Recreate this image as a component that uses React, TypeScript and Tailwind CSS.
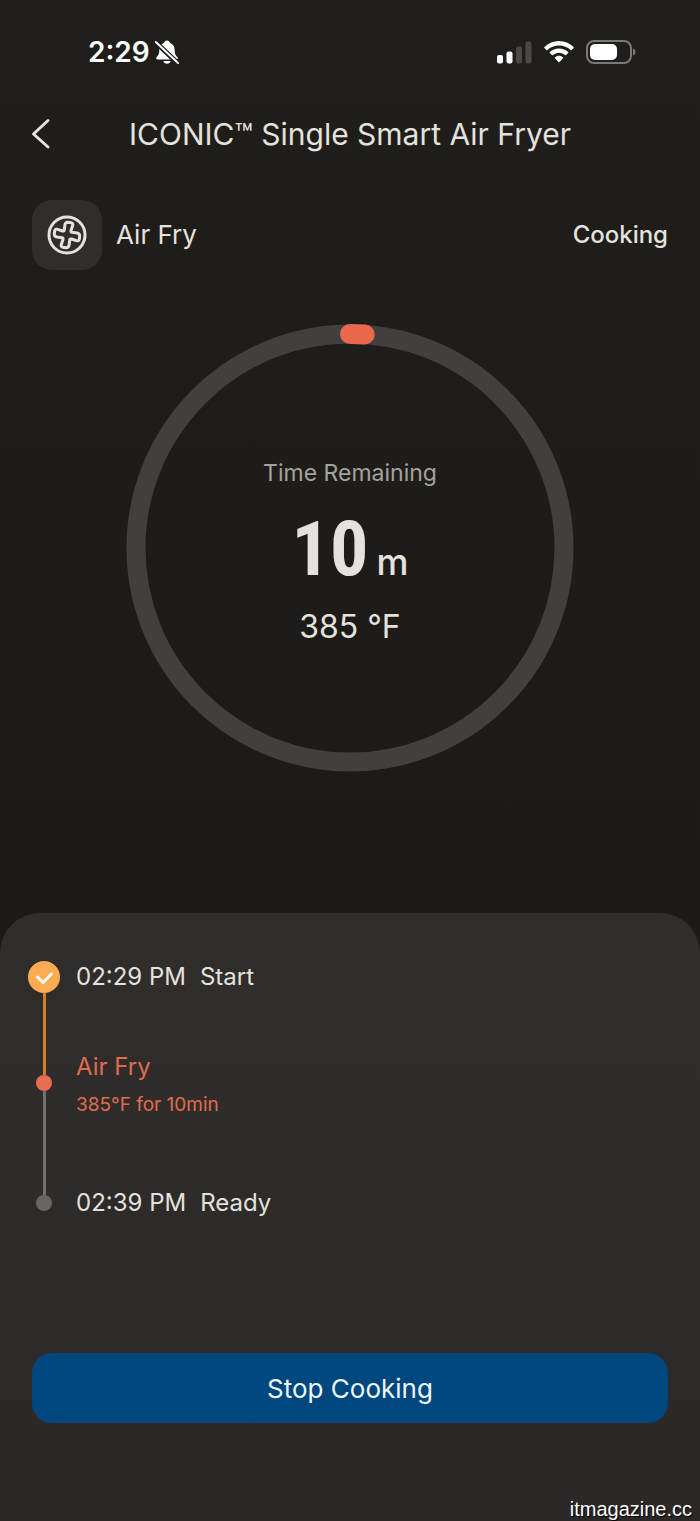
import type { ReactNode } from "react";

const RING_RADIUS = 214;
const RING_LENGTH = 2 * Math.PI * RING_RADIUS;

function StatusBar() {
  return (
    <div className="flex h-[104px] items-center justify-between pr-16 pl-[88px] text-white">
      <div className="flex items-center gap-1">
        <span className="text-[28px] leading-8 font-semibold">2:29</span>
        {/* Silent mode bell */}
        <svg className="h-[26px] w-[26px]" viewBox="0 0 26 26" fill="none">
          <path
            d="M13 1.500c-1.600 0-2.700 1-2.900 2.300C7 5 5.400 7.500 5.300 11c-.1 4.300-1 5.400-2.600 7-.9 1-.5 2.600 1 2.600h18.600c1.500 0 1.900-1.600 1-2.600-1.600-1.600-2.500-2.700-2.600-7-.1-3.500-1.700-6-4.800-7.200C15.700 2.500 14.600 1.500 13 1.500Z"
            fill="#fff"
          />
          <path d="M9.300 22h7.400c-.5 1.800-1.900 2.800-3.700 2.800S9.800 23.800 9.300 22Z" fill="#fff" />
          <path d="M1.500 3 24 24.500" stroke="#201e1b" strokeWidth="5" />
          <path d="M1.800 3 24 24" stroke="#fff" strokeWidth="2" strokeLinecap="round" />
        </svg>
      </div>
      <div className="flex items-center gap-3">
        {/* Signal */}
        <svg className="h-6 w-9" viewBox="0 0 36 24">
          <rect x="1" y="15" width="6" height="8.500" rx="2" fill="#fff" />
          <rect x="10.500" y="11.500" width="6" height="12" rx="2" fill="#fff" />
          <rect x="20" y="6.500" width="6" height="17" rx="2" fill="#4b4947" />
          <rect x="29.500" y="1.500" width="6" height="22" rx="2" fill="#4b4947" />
        </svg>
        {/* Wi-Fi */}
        <svg className="h-6 w-[30px]" viewBox="0 0 30 24" fill="#fff">
          <path d="M15 1C9.400 1 4.300 3.200.4 6.900c-.3.300-.3.700 0 1l2 2c.3.300.7.300 1 0C6.500 7 10.600 5.400 15 5.400S23.500 7 26.600 9.900c.3.300.7.300 1 0l2-2c.3-.3.300-.7 0-1C25.700 3.200 20.600 1 15 1Z" />
          <path d="M15 8.500c-3.500 0-6.700 1.300-9.200 3.600-.3.300-.3.700 0 1l2.100 2c.3.300.7.300 1 0 1.600-1.500 3.800-2.400 6.100-2.400s4.500.9 6.100 2.400c.3.300.7.300 1 0l2.100-2c.3-.3.300-.7 0-1-2.500-2.300-5.700-3.600-9.200-3.600Z" />
          <path d="M15 15.800c-1.500 0-2.900.6-4 1.500-.3.300-.3.700 0 1l3.500 3.600c.3.300.7.300 1 0l3.500-3.600c.3-.3.300-.7 0-1-1.100-.9-2.500-1.500-4-1.500Z" />
        </svg>
        {/* Battery */}
        <svg className="h-6 w-[50px]" viewBox="0 0 50 24" fill="none">
          <rect x="1" y="1" width="44" height="22" rx="7" stroke="#7b7977" strokeWidth="2" />
          <rect x="4" y="4" width="27" height="16" rx="5" fill="#fff" />
          <path d="M47 8.500c1.600.6 2.500 1.900 2.500 3.500s-.9 2.900-2.500 3.500v-7Z" fill="#7b7977" />
        </svg>
      </div>
    </div>
  );
}

function FanIcon() {
  return (
    <svg className="h-10 w-10" viewBox="0 0 40 40" fill="none" stroke="#e4e2df" strokeLinejoin="round">
      <circle cx="20" cy="20" r="18" strokeWidth="3" />
      <path
        d="M17.200 15.200 17.900 10Q18.400 7.200 21 7.300L24.200 7.700Q26.400 8.200 25.700 10.600L24 15.500Q23.800 17.200 24.800 17.200L30 17.900Q32.800 18.400 32.700 21L32.300 24.200Q31.800 26.400 29.400 25.700L24.500 24Q22.800 23.800 22.800 24.800L22.100 30Q21.600 32.800 19 32.700L15.800 32.300Q13.600 31.800 14.300 29.400L16 24.500Q16.200 22.800 15.200 22.800L10 22.100Q7.200 21.600 7.300 19L7.700 15.800Q8.200 13.600 10.600 14.300L15.500 16Q17.200 16.200 17.200 15.200Z"
        strokeWidth="3"
      />
    </svg>
  );
}

function ProgressRing({ progress, children }: { progress: number; children: ReactNode }) {
  return (
    <div className="mx-auto mt-[54px] grid w-full max-w-[448px] place-items-center">
      <svg className="col-start-1 row-start-1 w-full" viewBox="0 0 448 448" fill="none">
        <circle cx="224" cy="224" r={RING_RADIUS} stroke="#41403e" strokeWidth="19" />
        <circle
          cx="224"
          cy="224"
          r={RING_RADIUS}
          stroke="#e9694c"
          strokeWidth="20"
          strokeLinecap="round"
          strokeDasharray={`${RING_LENGTH * progress} ${RING_LENGTH}`}
          transform="rotate(-90 224 224)"
        />
      </svg>
      <div className="col-start-1 row-start-1 flex flex-col items-center">{children}</div>
    </div>
  );
}

function Timeline() {
  return (
    <ol className="pl-7 text-2xl leading-8">
      <li className="flex h-[90px] gap-4">
        <div className="flex w-8 flex-col items-center">
          <svg className="h-8 w-8 shrink-0" viewBox="0 0 32 32" fill="none">
            <circle cx="16" cy="16" r="16" fill="#fdac53" />
            <path d="m9.500 16 5.500 5.500L23.500 13" stroke="#fff" strokeWidth="3" strokeLinecap="round" />
          </svg>
          <span className="w-[3px] flex-1 bg-[#d28028]" />
        </div>
        <p className="flex gap-3.5">
          <time>02:29 PM</time>
          <span>Start</span>
        </p>
      </li>
      <li className="flex h-[136px] gap-4 text-[#e06c50]">
        <div className="flex w-8 flex-col items-center">
          <span className="h-6 w-[3px] bg-[#d28028]" />
          <span className="h-4 w-4 rounded-full bg-[#e66d4d]" />
          <span className="w-[3px] flex-1 bg-[#727170]" />
        </div>
        <div>
          <p>Air Fry</p>
          <p className="mt-2 text-[19px] leading-7">385°F for 10min</p>
        </div>
      </li>
      <li className="flex gap-4">
        <div className="flex w-8 flex-col items-center">
          <span className="h-2 w-[3px] bg-[#727170]" />
          <span className="h-4 w-4 rounded-full bg-[#666664]" />
        </div>
        <p className="flex gap-3.5">
          <time>02:39 PM</time>
          <span>Ready</span>
        </p>
      </li>
    </ol>
  );
}

export default function App() {
  return (
    <div className="flex min-h-screen flex-col bg-linear-to-b from-[#201e1b] to-[#1a1714] font-['Inter',sans-serif] text-[#e4e2df]">
      <StatusBar />

      <header className="grid h-[60px] grid-cols-[48px_1fr_48px] items-center px-6">
        <button type="button" aria-label="Back" className="pl-1.5">
          <svg className="h-8 w-6" viewBox="0 0 24 32" fill="none">
            <path d="M18 2.500 3.500 16l14.500 13" stroke="#e4e2df" strokeWidth="3" strokeLinecap="round" strokeLinejoin="round" />
          </svg>
        </button>
        <h1 className="text-center text-3xl leading-9 whitespace-nowrap">ICONIC™ Single Smart Air Fryer</h1>
      </header>

      <section className="mt-9 flex items-center justify-between px-8">
        <div className="flex items-center gap-3.5">
          <span className="grid h-[70px] w-[70px] place-items-center rounded-[20px] bg-[#2f2e2b]">
            <FanIcon />
          </span>
          <span className="text-[26px] leading-8">Air Fry</span>
        </div>
        <span className="text-2xl leading-8 font-medium">Cooking</span>
      </section>

      <ProgressRing progress={0.011}>
        <p className="pt-2 text-[23px] leading-8 text-[#a5a29f]">Time Remaining</p>
        <p className="mt-5 flex items-baseline gap-2">
          <span className="font-['Liberation_Sans_Narrow','Roboto_Condensed','Liberation_Sans',sans-serif] text-[76px] leading-[80px] font-bold">
            10
          </span>
          <span className="text-4xl font-medium">m</span>
        </p>
        <p className="mt-[18px] text-[32px] leading-10">385 °F</p>
      </ProgressRing>

      <main className="mt-[141px] flex flex-1 flex-col rounded-t-[40px] bg-linear-to-b from-[#302d2b] to-[#2b2827] pt-12">
        <Timeline />
        <div className="mt-[134px] px-8">
          <button type="button" className="h-[70px] w-full rounded-[20px] bg-[#00477f] text-[26px] text-[#edf8fc]">
            Stop Cooking
          </button>
        </div>
        <footer className="mt-auto pr-2 text-right font-['Liberation_Sans',sans-serif] text-xl leading-6 text-white text-shadow-[1px_1px_1px_#000]">
          itmagazine.cc
        </footer>
      </main>
    </div>
  );
}
